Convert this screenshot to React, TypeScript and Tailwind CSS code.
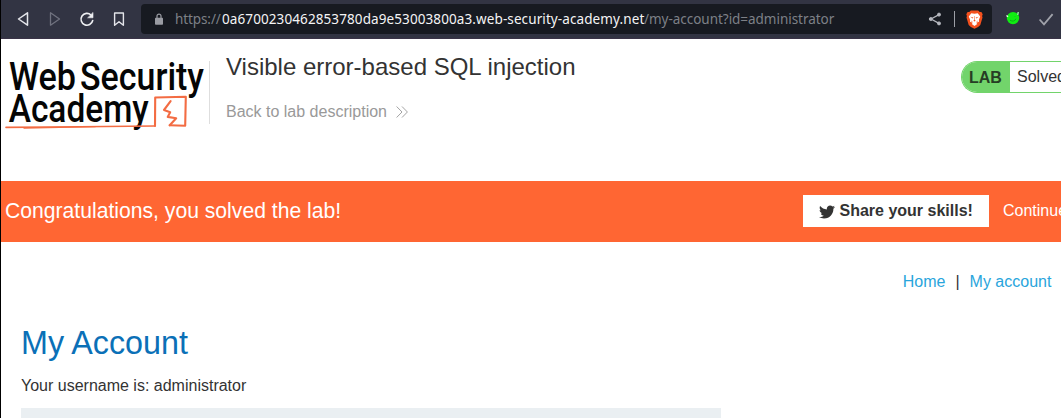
import { FaTwitter } from "react-icons/fa";

function BrowserBar() {
  return (
    <header className="flex h-[39px] shrink-0 items-center border-b border-[#3a3347] bg-[#323443] font-['Noto_Sans',sans-serif]">
      <nav className="flex w-[140px] shrink-0 items-center">
        <svg width="140" height="38" viewBox="1 0 140 38" fill="none" strokeLinejoin="round" strokeLinecap="round">
          <path d="M27.5 12.8v12.4L18.5 19z" stroke="#e4e5ea" strokeWidth="1.5" />
          <path d="M50.5 12.8v12.4l9-6.2z" stroke="#70727f" strokeWidth="1.3" />
          <path d="M91 15A5.9 5.9 0 1 0 92.7 20.5" stroke="#eeeff2" strokeWidth="1.6" />
          <path d="M93 12.8v5h-5z" fill="#eeeff2" stroke="#eeeff2" strokeWidth=".6" />
          <path d="M114.6 13h8.8v12.3l-4.4-3.6-4.4 3.6z" stroke="#e4e5ea" strokeWidth="1.4" />
        </svg>
      </nav>
      <div className="flex h-[30px] w-[851px] shrink-0 items-center rounded-[4px] bg-[#171a21] pl-[14px] pr-[9px]">
        <svg width="8" height="12" viewBox="0 0 8 12" fill="none">
          <path d="M2 5V3.1a2 2 0 0 1 4 0V5" stroke="#9a9ca3" strokeWidth="1.2" />
          <rect y="4.7" width="8" height="7" rx=".8" fill="#9a9ca3" />
        </svg>
        <div className="ml-3 flex whitespace-nowrap text-[13.5px] leading-5 text-[#7d8087]">
          <span className="w-[47px] tracking-[-0.1px]">https://</span>
          <span className="w-[422px] tracking-[0.1px] text-[#f4f4f5]">0a6700230462853780da9e53003800a3.web-security-academy.net</span>
          <span className="tracking-[-0.03px]">/my-account?id=administrator</span>
        </div>
        <svg className="ml-auto" width="14" height="14" viewBox="0 0 14 14" fill="#b6b8bf" stroke="#b6b8bf">
          <path d="M11 2.6 3 7l8 4.4" fill="none" strokeWidth="1.2" />
          <circle cx="11" cy="2.6" r="1.5" />
          <circle cx="2.8" cy="7" r="1.5" />
          <circle cx="11" cy="11.4" r="1.5" />
        </svg>
        <div className="ml-3 h-4 w-px bg-[#9c9fa6]" />
        <svg className="ml-[11px]" width="17" height="19" viewBox="0 0 17 19">
          <path d="M4.8.5h7.4l1.5 1.6 1.7-.1 1.3 2.2-.6 1.7.4 1.5-2.2 7.5-2.2 2-3.6 1.8-3.6-1.8-2.2-2L.5 7.4.9 5.9.3 4.2 1.6 2l1.7.1z" fill="#f4511e" />
          <path d="m5.3 3.3 3.2.5 3.2-.5 2.5 3.3-1.3 3.2.1 2-2.8 1 1 1.1-2.7 2-2.7-2 1-1.1-2.8-1 .1-2-1.3-3.2z" fill="#fff" />
          <path d="m4.2 6.8 3.1.8-.5 1zM12.8 6.8l-3.1.8.5 1zM8.3 6h.4l.1 4 .9.8-1.2.8-1.2-.8.9-.8zM5 10.5l2 1.4-1.6-.3zM12 10.5l-2 1.4 1.6-.3z" fill="#f4511e" />
        </svg>
      </div>
      <svg width="69" height="38" viewBox="992 0 69 38" fill="none">
        <circle cx="1013" cy="18.1" r="6.2" fill="#10ed12" />
        <path d="m1017 13 1.5-1.3.1 3z" fill="#10ed12" />
        <path d="m1006.5 15.4 1.5 1.3" stroke="#f3ffed" strokeWidth="1.3" />
        <path d="m1018.2 12-.4 3" stroke="#eff" strokeWidth=".8" />
        <path d="M1010 20.2q4 2.4 6-1.5M1015 16.5l.3.5" stroke="#07a513" strokeWidth=".8" />
        <path d="m1039.6 19.5 4.4 4.8 8.6-10.1" stroke="#a0a2aa" strokeWidth="1.8" />
      </svg>
    </header>
  );
}

function AcademyLogo() {
  return (
    <svg className="shrink-0" width="208" height="84" viewBox="1 55 208 84" role="img" aria-label="Web Security Academy">
      <g className="font-['Roboto',sans-serif] text-[38px] font-medium" fill="#050505">
        <text x="9" y="89.8" textLength="67" lengthAdjust="spacingAndGlyphs">Web</text>
        <text x="80" y="89.8" textLength="124" lengthAdjust="spacingAndGlyphs">Security</text>
        <text x="8.7" y="122.3" textLength="140" lengthAdjust="spacingAndGlyphs">Academy</text>
      </g>
      <g fill="none" stroke="#f36c43" strokeLinejoin="round" strokeLinecap="round">
        <path d="M6 127.4 55 127l100-1" strokeWidth="1.6" />
        <path d="M24 128 95 126.7" strokeWidth="1.3" />
        <path d="M155 126l.2-28.5 30.6-.8-.6 29-15.5-.4" strokeWidth="2.1" />
        <path d="m170.6 101.2-6.6 8.8 6.2 2.2-2.5 4.7 8.5 1.4-6.5 7" strokeWidth="2.1" />
      </g>
    </svg>
  );
}

function LabHeader() {
  return (
    <section className="flex h-[142px] shrink-0 pt-4">
      <AcademyLogo />
      <div className="mt-[6px] h-[63px] w-px shrink-0 bg-[#dedede]" />
      <div className="ml-4 flex flex-col whitespace-nowrap">
        <h2 className="-mt-px text-2xl leading-[26px]">Visible error-based SQL injection</h2>
        <a className="mt-[22px] flex items-center text-base leading-5 text-[#999]">
          Back to lab description
          <svg className="ml-[9px]" width="12" height="12" viewBox="0 0 12 12" fill="none" stroke="#999" strokeWidth=".9">
            <path d="m.6.5 5.4 5.5-5.4 5.5M6 .5 11.4 6 6 11.5" />
          </svg>
        </a>
      </div>
      <div className="ml-auto mt-[6px] flex h-8 w-[100px] shrink-0 items-center overflow-hidden rounded-l-full border-y border-l border-[#72d46b] whitespace-nowrap">
        <b className="flex h-full w-12 shrink-0 items-center bg-[#72d46b] pl-[7px] pt-0.5 text-base text-[#263d24]">LAB</b>
        <span className="ml-[7px] text-base">Solved</span>
      </div>
    </section>
  );
}

function SolvedBanner() {
  return (
    <section className="flex h-[61px] shrink-0 items-center whitespace-nowrap bg-[#ff6633] pb-0.5 pl-1 text-white">
      <h4 className="text-[21.15px] leading-6">Congratulations, you solved the lab!</h4>
      <button className="ml-auto flex h-8 w-[186px] shrink-0 items-center bg-white pl-4 text-base font-bold text-[#333]">
        <FaTwitter className="mr-[4.5px] mt-0.5 size-4" />
        Share your skills!
      </button>
      <span className="ml-[14px] w-[58px] shrink-0 text-base">Continue</span>
    </section>
  );
}

export default function App() {
  return (
    <div className="flex h-[418px] w-[1061px] flex-col overflow-hidden border-l border-black bg-white font-['Liberation_Sans',Arial,sans-serif] text-[#333]">
      <BrowserBar />
      <LabHeader />
      <SolvedBanner />
      <main className="flex flex-1 flex-col pl-5">
        <nav className="mt-[30px] flex justify-end pr-[9.6px] text-base leading-5 text-[#29a5dc]">
          <a>Home</a>
          <span className="mx-[10px] text-[#333]">|</span>
          <a>My account</a>
        </nav>
        <h1 className="mt-[31px] text-[32.3px] leading-10 text-[#0b70b7]">My Account</h1>
        <p className="mt-[13px] text-base leading-5">Your username is: administrator</p>
        <div className="mt-[12px] h-[10px] w-[700px] bg-[#eaeff2]" />
      </main>
    </div>
  );
}
